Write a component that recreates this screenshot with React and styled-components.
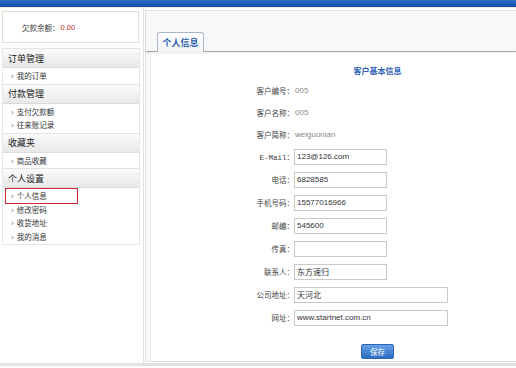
import React from 'react';
import styled, { createGlobalStyle } from 'styled-components';

const GlobalStyle = createGlobalStyle`
  html, body {
    margin: 0;
    padding: 0;
    background: #fff;
  }
  body {
    font-family: "Liberation Sans", "Noto Sans CJK SC", sans-serif;
    color: #333;
  }
  * {
    box-sizing: border-box;
  }
`;

const menu = [
  { title: '订单管理', items: ['我的订单'] },
  { title: '付款管理', items: ['支付欠款额', '往来账记录'] },
  { title: '收藏夹', items: ['商品收藏'] },
  { title: '个人设置', items: ['个人信息', '修改密码', '收货地址', '我的消息'] },
];

const infoRows = [
  { label: '客户编号：', value: '005' },
  { label: '客户名称：', value: '005' },
  { label: '客户简称：', value: 'weiguonian' },
];

const inputRows = [
  { label: 'E-Mail：', value: '123@126.com', mono: true },
  { label: '电话：', value: '6828585' },
  { label: '手机号码：', value: '15577016966' },
  { label: '邮编：', value: '545600' },
  { label: '传真：', value: '' },
  { label: '联系人：', value: '东方速归' },
  { label: '公司地址：', value: '天河北', wide: true },
  { label: '网址：', value: 'www.startnet.com.cn', wide: true },
];

const App = () => {
  return (
    <Page>
      <GlobalStyle />
      <TopBar />
      <Main>
        <Sidebar>
          <Balance>
            欠款余额：<BalanceValue>0.00</BalanceValue>
          </Balance>
          <Menu>
            {menu.map((group) => (
              <div key={group.title}>
                <MenuHeader>{group.title}</MenuHeader>
                <MenuGroup>
                  {group.items.map((item) => (
                    <MenuItem key={item} $active={item === '个人信息'}>
                      <Arrow>›</Arrow>
                      {item}
                    </MenuItem>
                  ))}
                </MenuGroup>
              </div>
            ))}
          </Menu>
        </Sidebar>
        <Panel>
          <TabBar>
            <Tab>个人信息</Tab>
          </TabBar>
          <Content>
            <Title>客户基本信息</Title>
            {infoRows.map((row) => (
              <Row key={row.label} $h={22}>
                <Label>{row.label}</Label>
                <Value>{row.value}</Value>
              </Row>
            ))}
            {inputRows.map((row) => (
              <Row key={row.label} $h={23}>
                <Label $mono={row.mono}>{row.label}</Label>
                <Input type='text' defaultValue={row.value} $wide={row.wide} />
              </Row>
            ))}
            <Actions>
              <SaveButton type='button'>保存</SaveButton>
            </Actions>
          </Content>
        </Panel>
      </Main>
      <Footer />
    </Page>
  );
};

const Page = styled.div`
  width: 516px;
  height: 368px;
  display: flex;
  flex-direction: column;
  overflow: hidden;
`;

const TopBar = styled.div`
  height: 8px;
  background: linear-gradient(to bottom, #2f71c9 0%, #1a5bb6 60%, #134fa6 100%);
  border-bottom: 1px solid #f3e9d6;
`;

const Main = styled.div`
  height: 355px;
  display: flex;
`;

const Sidebar = styled.div`
  width: 144px;
  padding: 3px 0 0 2px;
  border-right: 1px solid #e0e0e0;
  background: #fff;
`;

const Balance = styled.div`
  width: 137px;
  height: 32px;
  border: 1px solid #e4ddd0;
  display: flex;
  align-items: center;
  padding-left: 19px;
  font-size: 7.5px;
  color: #444;
`;

const BalanceValue = styled.span`
  color: #c0302c;
  margin-left: 1px;
`;

const Menu = styled.div`
  width: 138px;
  margin-top: 5px;
  border: 1px solid #e6e6e6;
  border-top: none;
`;

const MenuHeader = styled.div`
  height: 20px;
  display: flex;
  align-items: center;
  padding-left: 5px;
  font-size: 9px;
  color: #222;
  background: linear-gradient(to bottom, #fbfbfb, #e8e8e8);
  border-top: 1px solid #e2e2e2;
  border-bottom: 1px solid #dcdcdc;
`;

const MenuGroup = styled.div`
  padding: 1px 0;
`;

const MenuItem = styled.div`
  height: ${(p) => (p.$active ? '15.5px' : '13.5px')};
  width: ${(p) => (p.$active ? '73px' : 'auto')};
  margin: ${(p) => (p.$active ? '-1px 0 -1px 2px' : '0')};
  border: ${(p) => (p.$active ? '1px solid #d5262d' : 'none')};
  padding-left: ${(p) => (p.$active ? '5px' : '8px')};
  display: flex;
  align-items: center;
  font-size: 7.5px;
  color: #333;
`;

const Arrow = styled.span`
  font-size: 8px;
  color: #777;
  margin-right: 3px;
  position: relative;
  top: 1px;
`;

const Panel = styled.div`
  flex: 1;
  margin: 2px 0 1px 1px;
  border: 1px solid #e2e2e2;
  border-right: none;
  background: #f8f8f8;
  display: flex;
  flex-direction: column;
`;

const TabBar = styled.div`
  padding: 21px 0 0 11px;
  border-bottom: 1px solid #a8a8a8;
  box-shadow: 0 1px 2px rgba(0, 0, 0, 0.1);
  display: flex;
  position: relative;
  z-index: 1;
`;

const Tab = styled.div`
  width: 47px;
  height: 20px;
  margin-bottom: -1px;
  border: 1px solid #a9b6c8;
  border-bottom: none;
  border-radius: 3px 3px 0 0;
  background: linear-gradient(to bottom, #ffffff, #f1f4f8);
  display: flex;
  align-items: center;
  justify-content: center;
  font-size: 9px;
  font-weight: bold;
  color: #2b5eae;
  font-family: "Noto Sans CJK SC", sans-serif;
`;

const Content = styled.div`
  flex: 1;
  margin-left: 4px;
  border-left: 1px solid #efefef;
  background: #fff;
  padding-left: 88px;
  overflow: hidden;
`;

const Title = styled.div`
  margin-top: 11px;
  height: 16px;
  line-height: 16px;
  text-align: center;
  font-size: 8px;
  font-weight: bold;
  color: #2f63b6;
  font-family: "Noto Sans CJK SC", sans-serif;
`;

const Row = styled.div`
  height: ${(p) => p.$h}px;
  display: flex;
  align-items: center;
`;

const Label = styled.div`
  width: 55px;
  text-align: right;
  font-size: 7.5px;
  color: #444;
  font-family: ${(p) =>
    p.$mono
      ? '"Liberation Mono", "Noto Sans CJK SC", monospace'
      : '"Liberation Sans", "Noto Sans CJK SC", sans-serif'};
`;

const Value = styled.div`
  padding-left: 1px;
  font-size: 8px;
  color: #8a8a8a;
`;

const Input = styled.input`
  width: ${(p) => (p.$wide ? '154px' : '93px')};
  height: 16px;
  margin: 0;
  padding: 0 2px;
  border: 1px solid #c9c9c9;
  background: #fff;
  font-family: "Liberation Sans", "Noto Sans CJK SC", sans-serif;
  font-size: 8px;
  color: #333;
  outline: none;
`;

const Actions = styled.div`
  margin-top: 15px;
  display: flex;
  justify-content: center;
`;

const SaveButton = styled.button`
  width: 33px;
  height: 15px;
  padding: 0;
  border: 1px solid #2e66b8;
  border-radius: 2px;
  background: linear-gradient(to bottom, #66a3e6, #2d6ac2);
  color: #fff;
  font-size: 7.5px;
  font-family: "Noto Sans CJK SC", sans-serif;
  cursor: pointer;
`;

const Footer = styled.div`
  height: 3px;
  background: #e2e2e2;
`;

export default App;
